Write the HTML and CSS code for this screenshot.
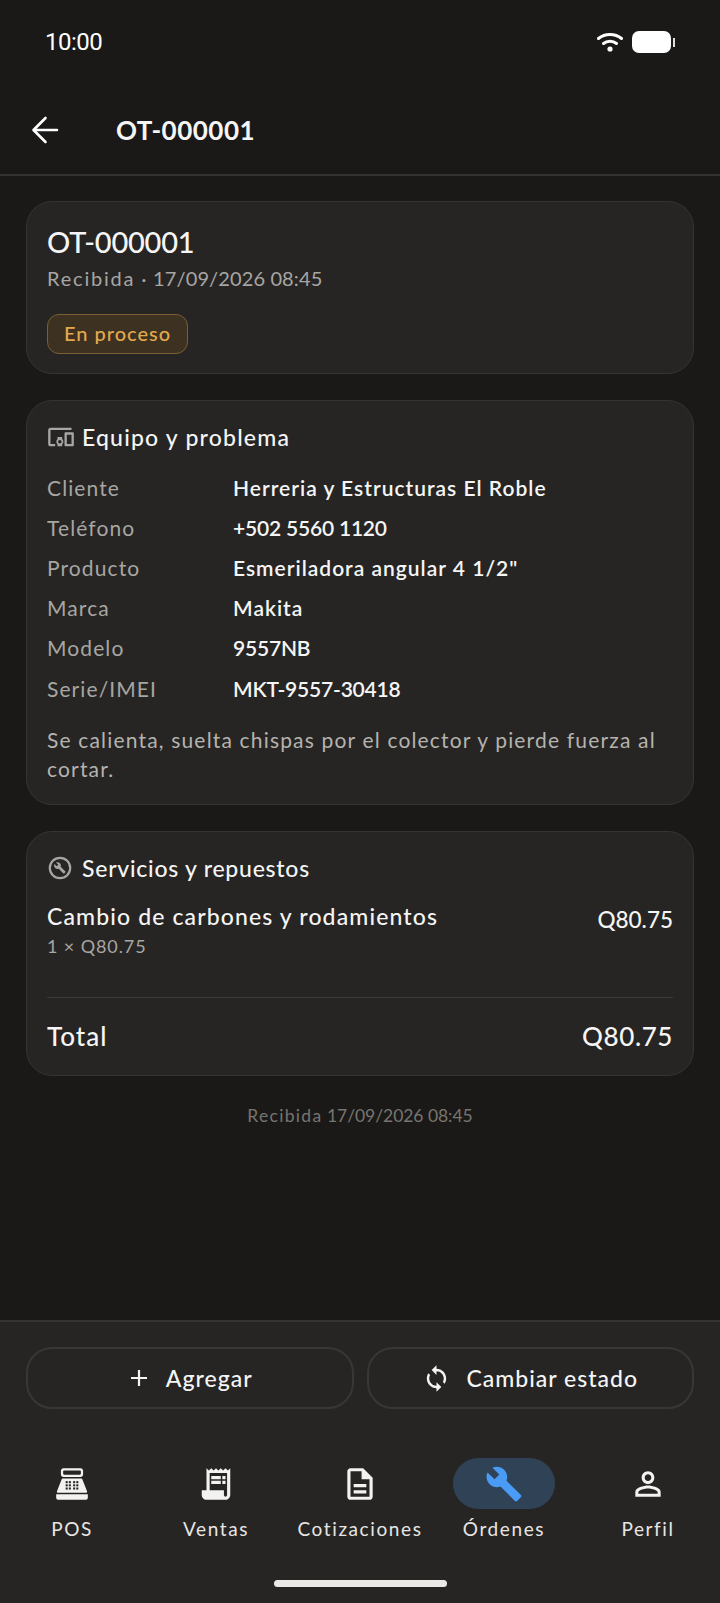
FILE: index.html
```html
<!DOCTYPE html>
<html lang="es">
  <head>
    <meta charset="UTF-8" />
    <meta name="viewport" content="width=device-width, initial-scale=1.0" />
    <title>OT-000001</title>
    <link rel="stylesheet" href="styles.css">
  </head>
  <body>
    <div class="screen">
      <!-- barra de estado -->
      <div class="status-bar">
        <span class="clock">10:00</span>
        <div class="status-icons">
          <svg class="wifi" width="26" height="20" viewBox="0 0 26 20">
            <path d="M1.500 6.500C8 1 18 1 24.500 6.500" fill="none" stroke="#fff" stroke-width="3" stroke-linecap="round" />
            <path d="M6.500 11.500C10 8.600 16 8.600 19.500 11.500" fill="none" stroke="#fff" stroke-width="3" stroke-linecap="round" />
            <circle cx="13" cy="17" r="2.600" fill="#fff" />
          </svg>
          <div class="battery"></div>
          <div class="battery-nub"></div>
        </div>
      </div>

      <!-- encabezado -->
      <header class="topbar">
        <svg class="back" width="28" height="28" viewBox="0 0 28 28">
          <path d="M26 14H3M14.500 2 2.500 14 14.500 26" fill="none" stroke="#fff" stroke-width="2.600" stroke-linecap="round" stroke-linejoin="round" />
        </svg>
        <h1>OT-000001</h1>
      </header>

      <main class="content">
        <section class="card card-head">
          <h2>OT-000001</h2>
          <p class="meta"><span class="meta-state">Recibida</span> · <span class="meta-date">17/09/2026 08:45</span></p>
          <span class="badge">En proceso</span>
        </section>

        <section class="card card-info">
          <div class="card-title">
            <svg class="title-icon" width="28" height="28" viewBox="0 0 24 24">
              <path fill="#a8a6a2" d="M3 6h18V4H3c-1.100 0-2 .9-2 2v12c0 1.100.9 2 2 2h4v-2H3V6zm10 6H9v1.780c-.61.55-1 1.330-1 2.220s.39 1.670 1 2.220V20h4v-1.780c.61-.55 1-1.340 1-2.220s-.39-1.670-1-2.220V12zm-2 5.500c-.83 0-1.500-.67-1.500-1.500s.67-1.500 1.500-1.500 1.500.67 1.500 1.500-.67 1.500-1.500 1.500zM22 8h-6c-.5 0-1 .5-1 1v10c0 .5.5 1 1 1h6c.5 0 1-.5 1-1V9c0-.5-.5-1-1-1zm-1 10h-4v-8h4v8z" />
            </svg>
            <span>Equipo y problema</span>
          </div>
          <div class="rows">
            <div class="row"><span class="label">Cliente</span><span class="value">Herreria y Estructuras El Roble</span></div>
            <div class="row"><span class="label">Teléfono</span><span class="value value-num">+502 5560 1120</span></div>
            <div class="row"><span class="label">Producto</span><span class="value">Esmeriladora angular 4 1/2"</span></div>
            <div class="row"><span class="label">Marca</span><span class="value">Makita</span></div>
            <div class="row"><span class="label">Modelo</span><span class="value value-num">9557NB</span></div>
            <div class="row"><span class="label">Serie/IMEI</span><span class="value value-num">MKT-9557-30418</span></div>
          </div>
          <p class="problem">Se calienta, suelta chispas por el colector y pierde fuerza al cortar.</p>
        </section>

        <section class="card card-items">
          <div class="card-title">
            <svg class="title-icon" width="26" height="26" viewBox="0 0 26 26">
              <circle cx="13" cy="13" r="10.200" fill="none" stroke="#a8a6a2" stroke-width="2.200" />
              <g transform="translate(6.600 6.600) scale(0.52)">
                <path fill="#a8a6a2" d="M22.700 19l-9.100-9.100c.9-2.300.4-5-1.500-6.900-2-2-5-2.400-7.400-1.300L9 6 6 9 1.600 4.700C.4 7.100.9 10.100 2.900 12.100c1.900 1.900 4.600 2.400 6.900 1.500l9.100 9.100c.4.4 1 .4 1.400 0l2.300-2.300c.5-.4.5-1.100.1-1.400z" />
              </g>
            </svg>
            <span>Servicios y repuestos</span>
          </div>
          <div class="item">
            <div>
              <div class="item-name">Cambio de carbones y rodamientos</div>
              <div class="item-qty">1 × Q80.75</div>
            </div>
            <div class="item-price">Q80.75</div>
          </div>
          <div class="total">
            <span>Total</span>
            <span class="total-price">Q80.75</span>
          </div>
        </section>

        <p class="received"><span class="received-state">Recibida</span> <span class="received-date">17/09/2026 08:45</span></p>
      </main>

      <div class="bottom">
        <div class="actions">
          <button class="action">
            <svg width="24" height="24" viewBox="0 0 24 24">
              <path d="M12 4v16M4 12h16" fill="none" stroke="#f5f5f5" stroke-width="2.200" />
            </svg>
            <span>Agregar</span>
          </button>
          <button class="action">
            <svg width="29" height="29" viewBox="0 0 24 24">
              <path fill="#f5f5f5" d="M12 4V1L8 5l4 4V6c3.310 0 6 2.690 6 6 0 1.010-.25 1.970-.7 2.800l1.460 1.460C19.540 15.030 20 13.570 20 12c0-4.420-3.580-8-8-8zm0 14c-3.310 0-6-2.690-6-6 0-1.010.25-1.970.7-2.800L5.240 7.740C4.460 8.970 4 10.430 4 12c0 4.420 3.580 8 8 8v3l4-4-4-4v3z" />
            </svg>
            <span>Cambiar estado</span>
          </button>
        </div>

        <nav class="tabs">
          <div class="tab">
            <div class="tab-icon">
              <svg width="38" height="38" viewBox="0 0 24 24">
                <path fill="#f2f2f0" fill-rule="evenodd" d="M6.600 2h10.800c.9 0 1.600.7 1.600 1.600v2.400c0 .9-.7 1.600-1.600 1.600H6.600C5.700 7.600 5 6.900 5 6V3.600C5 2.700 5.700 2 6.600 2zm.4 1.500c-.4 0-.6.2-.6.5v1.600c0 .3.2.5.6.5h10c.4 0 .6-.2.6-.5V4c0-.3-.2-.5-.6-.5H7z" />
                <path fill="#f2f2f0" d="M6.500 8.600h11c.6 0 1 .3 1.200.9L21.500 16.500c.2.500-.1 1-.7 1H3.200c-.6 0-.9-.5-.7-1L5.300 9.500c.2-.6.6-.9 1.200-.9z" />
                <path fill="#f2f2f0" d="M2 18.500h20V20.500c0 .8-.7 1.500-1.500 1.500h-17C2.700 22 2 21.300 2 20.500z" />
                <g fill="#262524">
                  <rect x="8" y="10.200" width="1.300" height="1.300" /><rect x="10" y="10.200" width="1.300" height="1.300" /><rect x="12.700" y="10.200" width="1.300" height="1.300" /><rect x="14.700" y="10.200" width="1.300" height="1.300" />
                  <rect x="8" y="12.200" width="1.300" height="1.300" /><rect x="10" y="12.200" width="1.300" height="1.300" /><rect x="12.700" y="12.200" width="1.300" height="1.300" /><rect x="14.700" y="12.200" width="1.300" height="1.300" />
                  <rect x="8" y="14.200" width="1.300" height="1.300" /><rect x="10" y="14.200" width="1.300" height="1.300" /><rect x="12.700" y="14.200" width="1.300" height="1.300" /><rect x="14.700" y="14.200" width="1.300" height="1.300" />
                </g>
              </svg>
            </div>
            <span class="tab-label">POS</span>
          </div>
          <div class="tab">
            <div class="tab-icon">
              <svg width="38" height="38" viewBox="0 0 24 24">
                <path fill="#f2f2f0" d="M19.500 3.500 18 2l-1.500 1.500L15 2l-1.500 1.500L12 2l-1.500 1.500L9 2 7.500 3.500 6 2v14H3v3c0 1.660 1.340 3 3 3h12c1.660 0 3-1.340 3-3V2l-1.500 1.500zM19 19c0 .550-.450 1-1 1s-1-.450-1-1v-3H8V5h11v14z" />
                <path fill="#f2f2f0" d="M9 7h6v2H9zm7 0h2v2h-2zm-7 3h6v2H9zm7 0h2v2h-2z" />
              </svg>
            </div>
            <span class="tab-label">Ventas</span>
          </div>
          <div class="tab">
            <div class="tab-icon">
              <svg width="38" height="38" viewBox="0 0 24 24">
                <path fill="#f2f2f0" d="M8 16h8v2H8zm0-4h8v2H8zm6-10H6c-1.100 0-2 .9-2 2v16c0 1.100.89 2 1.990 2H18c1.100 0 2-.9 2-2V8l-6-6zm4 18H6V4h7v5h5v11z" />
              </svg>
            </div>
            <span class="tab-label">Cotizaciones</span>
          </div>
          <div class="tab">
            <div class="tab-icon tab-active">
              <svg width="38" height="38" viewBox="0 0 24 24">
                <path fill="#4a9bf5" d="M22.700 19l-9.100-9.100c.9-2.300.4-5-1.500-6.900-2-2-5-2.400-7.400-1.300L9 6 6 9 1.600 4.700C.4 7.100.9 10.100 2.900 12.100c1.900 1.900 4.600 2.400 6.900 1.500l9.100 9.100c.4.4 1 .4 1.400 0l2.300-2.300c.5-.4.5-1.100.1-1.400z" />
              </svg>
            </div>
            <span class="tab-label">Órdenes</span>
          </div>
          <div class="tab">
            <div class="tab-icon">
              <svg width="38" height="38" viewBox="0 0 24 24">
                <path fill="#f2f2f0" d="M12 5.900c1.160 0 2.100.94 2.100 2.100s-.94 2.100-2.100 2.100S9.900 9.160 9.900 8s.94-2.100 2.100-2.100m0 9c2.970 0 6.100 1.460 6.100 2.100v1.100H5.900V17c0-.64 3.130-2.100 6.100-2.100M12 4C9.790 4 8 5.790 8 8s1.790 4 4 4 4-1.790 4-4-1.790-4-4-4zm0 9c-2.670 0-8 1.340-8 4v3h16v-3c0-2.660-5.330-4-8-4z" />
              </svg>
            </div>
            <span class="tab-label">Perfil</span>
          </div>
        </nav>

        <div class="home-bar"></div>
      </div>
    </div>
  </body>
</html>
```

FILE: styles.css
```css
* {
  box-sizing: border-box;
}
body {
  margin: 0;
  background-color: #1a1918;
  font-family: Lato, "Noto Sans", sans-serif;
  color: #f5f5f5;
}
.screen {
  display: flex;
  flex-direction: column;
  height: 1603px;
  overflow: hidden;
}
.status-bar {
  display: flex;
  justify-content: space-between;
  align-items: center;
  height: 84px;
  padding: 0 45px;
}
.clock {
  font-family: Roboto, sans-serif;
  font-size: 24px;
  letter-spacing: -0.5px;
  color: #fff;
}
.status-icons {
  display: flex;
  align-items: center;
}
.wifi {
  margin-right: 9px;
}
.battery {
  width: 39px;
  height: 22px;
  background-color: #fff;
  border-radius: 7px;
}
.battery-nub {
  width: 2px;
  height: 9px;
  margin-left: 2px;
  background-color: #ddd;
}
.topbar {
  display: flex;
  align-items: center;
  height: 92px;
  padding: 2px 0 0 31px;
  border-bottom: 2px solid #333231;
}
.back {
  margin-right: 57px;
}
h1 {
  margin: 0;
  font-size: 26px;
  font-weight: 700;
  letter-spacing: 0.5px;
}
.content {
  flex: 1;
  padding: 25px 26px 0;
}
.card {
  margin-bottom: 26px;
  padding: 0 20px;
  background-color: #262524;
  border: 1.5px solid #353433;
  border-radius: 26px;
}
.card-head {
  height: 173px;
  padding-top: 22px;
}
h2 {
  margin: 0;
  font-size: 29px;
  line-height: 36px;
  font-weight: 500;
  letter-spacing: -0.25px;
}
.meta {
  margin: 4px 0 0;
  font-size: 20px;
  line-height: 28px;
  letter-spacing: 0.76px;
  color: #a8a6a2;
}
.meta-state {
  letter-spacing: 1.8px;
}
.meta-date {
  letter-spacing: 0.12px;
}
.badge {
  display: inline-flex;
  align-items: center;
  height: 40px;
  margin-top: 22px;
  padding: 0 16px 2px;
  font-size: 20px;
  font-weight: 500;
  letter-spacing: 1px;
  color: #e2a94e;
  background-color: #3d3122;
  border: 1.5px solid #7a5f33;
  border-radius: 12px;
}
.card-title {
  display: flex;
  align-items: center;
  height: 30px;
  font-size: 23px;
  font-weight: 500;
  letter-spacing: 1.2px;
}
.title-icon {
  margin-right: 7px;
}
.card-info {
  height: 405px;
  padding-top: 21px;
}
.rows {
  margin-top: 15px;
}
.row {
  display: flex;
  height: 40.2px;
  align-items: center;
  font-size: 21px;
}
.label {
  width: 186px;
  letter-spacing: 1.1px;
  color: #a8a6a2;
}
.value {
  font-weight: 600;
  letter-spacing: 1px;
}
.value-num {
  letter-spacing: -0.2px;
}
.problem {
  margin: 17px 0 0;
  font-size: 21px;
  line-height: 29px;
  letter-spacing: 1.17px;
  color: #b5b3ae;
}
.card-items {
  height: 245px;
  padding-top: 21px;
}
.card-items .card-title {
  letter-spacing: 0.75px;
}
.card-items .title-icon {
  margin-right: 9px;
}
.item {
  display: flex;
  justify-content: space-between;
  margin-top: 18px;
  height: 96.5px;
  border-bottom: 1.5px solid #3a3938;
}
.item-name {
  font-size: 23px;
  line-height: 30px;
  font-weight: 500;
  letter-spacing: 1.13px;
}
.item-qty {
  margin-top: 3px;
  font-size: 18px;
  line-height: 24px;
  letter-spacing: 0.9px;
  color: #a8a6a2;
}
.item-price {
  margin-top: 4px;
  font-size: 22.5px;
  line-height: 30px;
  font-weight: 500;
}
.total {
  display: flex;
  justify-content: space-between;
  align-items: center;
  height: 76.5px;
  font-size: 26px;
  font-weight: 500;
  letter-spacing: 1px;
}
.total-price {
  letter-spacing: 0.6px;
}
.received {
  margin: 27px 0 0;
  text-align: center;
  font-size: 17.5px;
  line-height: 26px;
  color: #77756f;
}
.received-state {
  letter-spacing: 1.3px;
}
.received-date {
  letter-spacing: -0.05px;
}
.bottom {
  height: 283px;
  background-color: #262524;
  border-top: 2px solid #353433;
}
.actions {
  display: flex;
  gap: 13px;
  padding: 25px 26px 0;
}
.action {
  flex: 1;
  display: flex;
  justify-content: center;
  align-items: center;
  gap: 15px;
  height: 62px;
  background: none;
  border: 2px solid #383736;
  border-radius: 26px;
  font-family: inherit;
  font-size: 23px;
  font-weight: 500;
  letter-spacing: 1px;
  color: #f5f5f5;
}
.tabs {
  display: flex;
  margin-top: 49px;
}
.tab {
  flex: 1;
  display: flex;
  flex-direction: column;
  align-items: center;
}
.tab-icon {
  display: flex;
  justify-content: center;
  align-items: center;
  width: 102px;
  height: 51px;
  border-radius: 26px;
}
.tab-active {
  background-color: #2f4256;
}
.tab-label {
  margin-top: 7px;
  font-size: 19px;
  line-height: 26px;
  letter-spacing: 1.6px;
  color: #e8e6e3;
}
.home-bar {
  width: 173px;
  height: 7px;
  margin: 38px auto 0;
  background-color: #ebe9e6;
  border-radius: 4px;
}
```
